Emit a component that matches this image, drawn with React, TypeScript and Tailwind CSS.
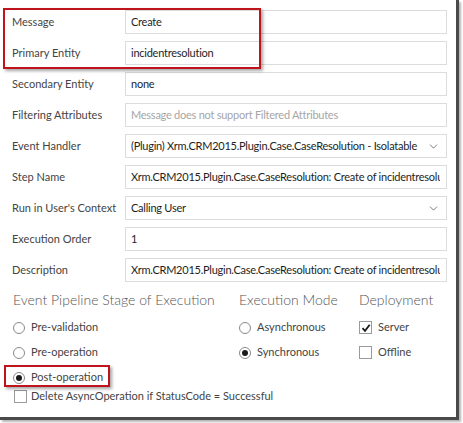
import { ChevronDown } from "lucide-react";

const font = { fontFamily: "Lato, 'Noto Sans', sans-serif" };

type Field = {
  label: string;
  value: string;
  placeholder?: boolean;
  select?: boolean;
};

const fields: Field[] = [
  { label: "Message", value: "Create" },
  { label: "Primary Entity", value: "incidentresolution" },
  { label: "Secondary Entity", value: "none" },
  { label: "Filtering Attributes", value: "Message does not support Filtered Attributes", placeholder: true },
  { label: "Event Handler", value: "(Plugin) Xrm.CRM2015.Plugin.Case.CaseResolution - Isolatable", select: true },
  { label: "Step Name", value: "Xrm.CRM2015.Plugin.Case.CaseResolution: Create of incidentresolution" },
  { label: "Run in User's Context", value: "Calling User", select: true },
  { label: "Execution Order", value: "1" },
  { label: "Description", value: "Xrm.CRM2015.Plugin.Case.CaseResolution: Create of incidentresolution" },
];

function Radio({ checked }: { checked?: boolean }) {
  return (
    <span className="flex h-[12px] w-[12px] shrink-0 items-center justify-center rounded-full border border-[#8a8a8a] bg-white">
      {checked && <span className="h-[6px] w-[6px] rounded-full bg-[#1a1a1a]" />}
    </span>
  );
}

function Check({ checked }: { checked?: boolean }) {
  return (
    <span className="flex h-[13px] w-[13px] shrink-0 items-center justify-center border border-[#9a9a9a] bg-white">
      {checked && (
        <svg width="10" height="10" viewBox="0 0 10 10">
          <path d="M1.5 5.2 L4 7.8 L8.7 1.8" fill="none" stroke="#1a1a1a" strokeWidth="1.8" />
        </svg>
      )}
    </span>
  );
}

function Option({ label, children }: { label: string; children: React.ReactNode }) {
  return (
    <div className="flex h-[25px] items-center gap-[6px] text-[11px] text-[#444]">
      {children}
      <span>{label}</span>
    </div>
  );
}

export default function App() {
  return (
    <div className="relative h-[423px] w-[463px] overflow-hidden bg-white" style={font}>
      <div className="h-[420px] w-[459px] border-b-[3px] border-r-[3px] border-[#4a4a4a] bg-white shadow-[2px_2px_2px_#b5b5b5]">
        {/* Form rows */}
        <div className="flex flex-col gap-[7px] pt-[10px] pl-[12px]">
          {fields.map((f) => (
            <div key={f.label} className="flex h-[24px] items-center">
              <div className="w-[113px] shrink-0 text-[11px] text-[#444]">{f.label}</div>
              <div className="flex h-[24px] w-[322px] items-center overflow-hidden border border-[#dcdcdc] bg-white pl-[5px] pr-[6px]">
                <span
                  className={`flex-1 overflow-hidden whitespace-nowrap text-[11px] tracking-[-0.25px] ${
                    f.placeholder ? "text-[#a6a6a6]" : "text-[#1e1e1e]"
                  }`}
                >
                  {f.value}
                </span>
                {f.select && <ChevronDown size={13} strokeWidth={1.3} className="ml-[4px] shrink-0 text-[#444]" />}
              </div>
            </div>
          ))}
        </div>

        {/* Options */}
        <div className="mt-[7px] flex pl-[13px]">
          <div className="w-[226px] shrink-0">
            <div className="h-[22px] whitespace-nowrap text-[14px] font-light text-[#555]">Event Pipeline Stage of Execution</div>
            <div className="mt-[4px]">
              <Option label="Pre-validation"><Radio /></Option>
              <Option label="Pre-operation"><Radio /></Option>
              <Option label="Post-operation"><Radio checked /></Option>
            </div>
          </div>
          <div className="w-[120px] shrink-0">
            <div className="h-[22px] whitespace-nowrap text-[14px] font-light text-[#555]">Execution Mode</div>
            <div className="mt-[4px]">
              <Option label="Asynchronous"><Radio /></Option>
              <Option label="Synchronous"><Radio checked /></Option>
            </div>
          </div>
          <div className="shrink-0">
            <div className="h-[22px] whitespace-nowrap text-[14px] font-light text-[#555]">Deployment</div>
            <div className="mt-[4px]">
              <Option label="Server"><Check checked /></Option>
              <Option label="Offline"><Check /></Option>
            </div>
          </div>
        </div>
        <div className="-mt-[2px] flex items-center gap-[4px] pl-[14px] text-[11px] text-[#444]">
          <Check />
          <span>Delete AsyncOperation if StatusCode = Successful</span>
        </div>
      </div>

      {/* Annotation boxes */}
      <div className="pointer-events-none absolute left-[3px] top-[8px] h-[61px] w-[258px] border-2 border-[#c0141c] shadow-[2px_2px_3px_rgba(0,0,0,0.35)]" />
      <div className="pointer-events-none absolute left-[4px] top-[365px] h-[22px] w-[106px] border-2 border-[#c0141c] shadow-[2px_2px_3px_rgba(0,0,0,0.35)]" />
    </div>
  );
}
